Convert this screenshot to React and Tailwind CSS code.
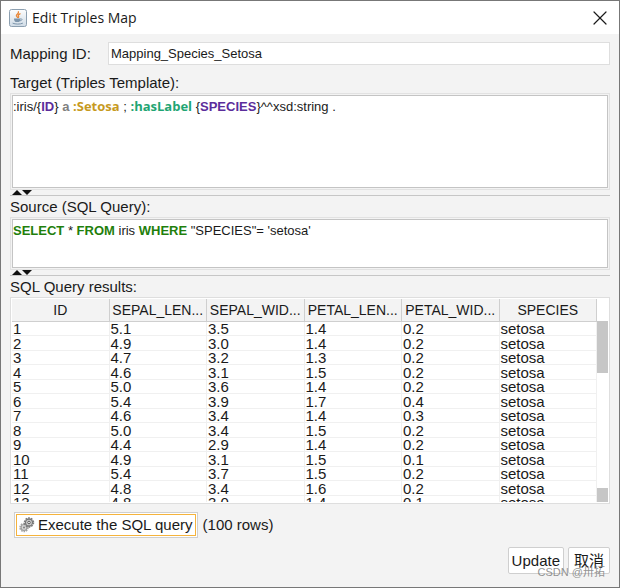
import React from 'react';
import { X } from 'lucide-react';

const columns = ['ID', 'SEPAL_LEN...', 'SEPAL_WID...', 'PETAL_LEN...', 'PETAL_WID...', 'SPECIES'];

const rows = [
    ['1', '5.1', '3.5', '1.4', '0.2', 'setosa'],
    ['2', '4.9', '3.0', '1.4', '0.2', 'setosa'],
    ['3', '4.7', '3.2', '1.3', '0.2', 'setosa'],
    ['4', '4.6', '3.1', '1.5', '0.2', 'setosa'],
    ['5', '5.0', '3.6', '1.4', '0.2', 'setosa'],
    ['6', '5.4', '3.9', '1.7', '0.4', 'setosa'],
    ['7', '4.6', '3.4', '1.4', '0.3', 'setosa'],
    ['8', '5.0', '3.4', '1.5', '0.2', 'setosa'],
    ['9', '4.4', '2.9', '1.4', '0.2', 'setosa'],
    ['10', '4.9', '3.1', '1.5', '0.1', 'setosa'],
    ['11', '5.4', '3.7', '1.5', '0.2', 'setosa'],
    ['12', '4.8', '3.4', '1.6', '0.2', 'setosa'],
    ['13', '4.8', '3.0', '1.4', '0.1', 'setosa'],
];

const JavaIcon = () => (
    <svg className="w-[18px] h-[18px]" viewBox="0 0 18 18" fill="none" aria-hidden="true">
        <defs>
            <linearGradient id="tile" x1="0" y1="0" x2="0" y2="1">
                <stop offset="0" stopColor="#fdfdfd" />
                <stop offset="1" stopColor="#cfdbe6" />
            </linearGradient>
        </defs>
        <rect x="0.5" y="0.5" width="17" height="17" rx="2" fill="url(#tile)" stroke="#8c9fb0" />
        <path d="M9.4 2.8c.9 1.7-2.4 2.4-2 4 .2.7.9 1 1.1 1.700M11 4.800c-1.300.6-2 1.300-1.600 2.100.3.6.5.9.1 1.600" stroke="#e8883a" strokeWidth="1.3" strokeLinecap="round" />
        <path d="M5 9.500h6.500c0 1.800-.6 3-1.600 3.500H6.600C5.600 12.500 5 11.300 5 9.500z" fill="#7d95ab" />
        <path d="M11.500 9.800c2-.4 2 1.900-.6 2" stroke="#7d95ab" />
        <path d="M4 14.300c2.500 1.100 7 1.100 9.500 0" stroke="#7d95ab" strokeLinecap="round" />
    </svg>
);

const GearsIcon = () => (
    <svg className="w-4 h-4" viewBox="0 0 16 16" fill="none" aria-hidden="true">
        <circle cx="5" cy="10.5" r="4" stroke="#a3a3a3" strokeWidth="1.5" strokeDasharray="1.6 0.9" />
        <circle cx="5" cy="10.5" r="3" fill="#d6d6d6" stroke="#9c9c9c" strokeWidth="1.2" />
        <circle cx="5" cy="10.5" r="1" fill="#808080" />
        <circle cx="10" cy="5.5" r="4.500" stroke="#7c7c7c" strokeWidth="1.500" strokeDasharray="1.700 1.127" />
        <circle cx="10" cy="5.5" r="3.500" fill="#cfcfcf" stroke="#777" strokeWidth="1.300" />
        <circle cx="10" cy="5.5" r="1.300" fill="#f4f4f4" stroke="#5c5c5c" />
    </svg>
);

const Splitter = () => (
    <div className="flex h-[6px] items-start border-b border-[#c6c6c6] pl-[2px]">
        <button aria-label="Collapse upper panel">
            <svg className="h-[5px] w-[10px]" viewBox="0 0 10 5"><path d="M0 5L5 0L10 5z" fill="#111" /></svg>
        </button>
        <button aria-label="Collapse lower panel">
            <svg className="h-[5px] w-[10px]" viewBox="0 0 10 5"><path d="M0 0L5 5L10 0z" fill="#111" /></svg>
        </button>
    </div>
);

const Editor = ({ labelId, className, children }) => (
    <div className="border border-[#e2e2e2] p-px">
        <div
            role="textbox"
            aria-multiline="true"
            aria-labelledby={labelId}
            contentEditable
            suppressContentEditableWarning
            spellCheck={false}
            className={`border border-[#c4c4c4] bg-white text-[13px] outline-none ${className}`}
        >
            {children}
        </div>
    </div>
);

const App = () => {
    return (
        <div className="relative flex min-h-screen flex-col border border-[#777] bg-[#f3f3f3] font-['Liberation_Sans','Noto_Sans_CJK_SC',sans-serif] text-[15px] leading-5 text-[#1a1a1a]">
            <header className="flex h-[33px] items-center gap-[5px] bg-white pl-2 pr-[7px]">
                <JavaIcon />
                <h1 className="flex-1 font-['Open_Sans','Noto_Sans',sans-serif] text-sm">Edit Triples Map</h1>
                <button aria-label="Close">
                    <X className="h-6 w-6" strokeWidth={1.2} />
                </button>
            </header>

            <main className="flex flex-1 flex-col px-[9px] pt-2">
                <div className="flex items-center">
                    <label htmlFor="mapping-id" className="w-[98px]">Mapping ID:</label>
                    <input
                        id="mapping-id"
                        type="text"
                        defaultValue="Mapping_Species_Setosa"
                        className="h-[23px] min-w-0 flex-1 border border-[#dedede] bg-white px-[2px] text-[13px] outline-none"
                    />
                </div>

                {/* Target */}
                <div id="target-label" className="mt-2">Target (Triples Template):</div>
                <Editor labelId="target-label" className="h-[93px]">
                    :iris/{'{'}<b className="text-[#5b2d9b]">ID</b>{'} '}
                    <b className="text-[#808080]">a</b>{' '}
                    <b className="font-['Open_Sans',sans-serif] text-[#c79a1e]">:Setosa</b>{' ; '}
                    <b className="font-['Open_Sans',sans-serif] text-[#1fa573]">:hasLabel</b>
                    {' {'}<b className="text-[#5b2d9b]">SPECIES</b>{'}^^xsd:string .'}
                </Editor>
                <Splitter />

                {/* Source */}
                <div id="source-label" className="mt-px">Source (SQL Query):</div>
                <Editor labelId="source-label" className="h-[49px] pt-px">
                    <b className="text-[#1f7f0c]">SELECT</b> * <b className="text-[#1f7f0c]">FROM</b> iris{' '}
                    <b className="text-[#1f7f0c]">WHERE</b> "SPECIES"= 'setosa'
                </Editor>
                <Splitter />

                {/* Results */}
                <div className="mt-px">SQL Query results:</div>
                <div className="flex h-[207px] overflow-hidden border border-[#dedede] bg-white p-px">
                    <div className="min-w-0 flex-1 overflow-hidden">
                        <table className="w-full table-fixed border-separate border-spacing-0">
                            <thead>
                                <tr className="h-[23px]">
                                    {columns.map((col) => (
                                        <th key={col} className="whitespace-nowrap border-b border-r border-[#cfcfcf] bg-[#f3f3f3] p-0 text-center text-sm font-normal">{col}</th>
                                    ))}
                                </tr>
                            </thead>
                            <tbody className="leading-[13px]">
                                {rows.map((row) => (
                                    <tr key={row[0]} className="odd:h-[14px] even:h-[15px]">
                                        {row.map((value, i) => (
                                            <td key={i} className="border-b border-r border-[#f0f0f0] p-0 pl-px">{value}</td>
                                        ))}
                                    </tr>
                                ))}
                            </tbody>
                        </table>
                    </div>
                    <div className="flex w-[11px] flex-col justify-between pt-[22px]">
                        <div className="h-[52px] bg-[#c6c6c6]" />
                        <div className="h-[14px] bg-[#c6c6c6]" />
                    </div>
                </div>

                <div className="mt-2 flex items-center gap-[5px] pl-1">
                    <button className="border border-[#cfcfcf] bg-white p-px">
                        <span className="flex h-[22px] items-center gap-[3px] border border-[#f5b33c] px-[2px]">
                            <GearsIcon />
                            Execute the SQL query
                        </span>
                    </button>
                    <span>(100 rows)</span>
                </div>

                <div className="mt-[9px] flex justify-end gap-1">
                    <button className="h-[27px] rounded-xs border border-[#cfcfcf] bg-white px-[3px]">Update</button>
                    <button className="h-[27px] rounded-xs border border-[#cfcfcf] bg-white px-[5px]">取消</button>
                </div>
            </main>

            <div className="pointer-events-none absolute bottom-[5px] right-[14px] text-[11px] text-[#777]/80">CSDN @卅拓</div>
        </div>
    );
};

export default App;
